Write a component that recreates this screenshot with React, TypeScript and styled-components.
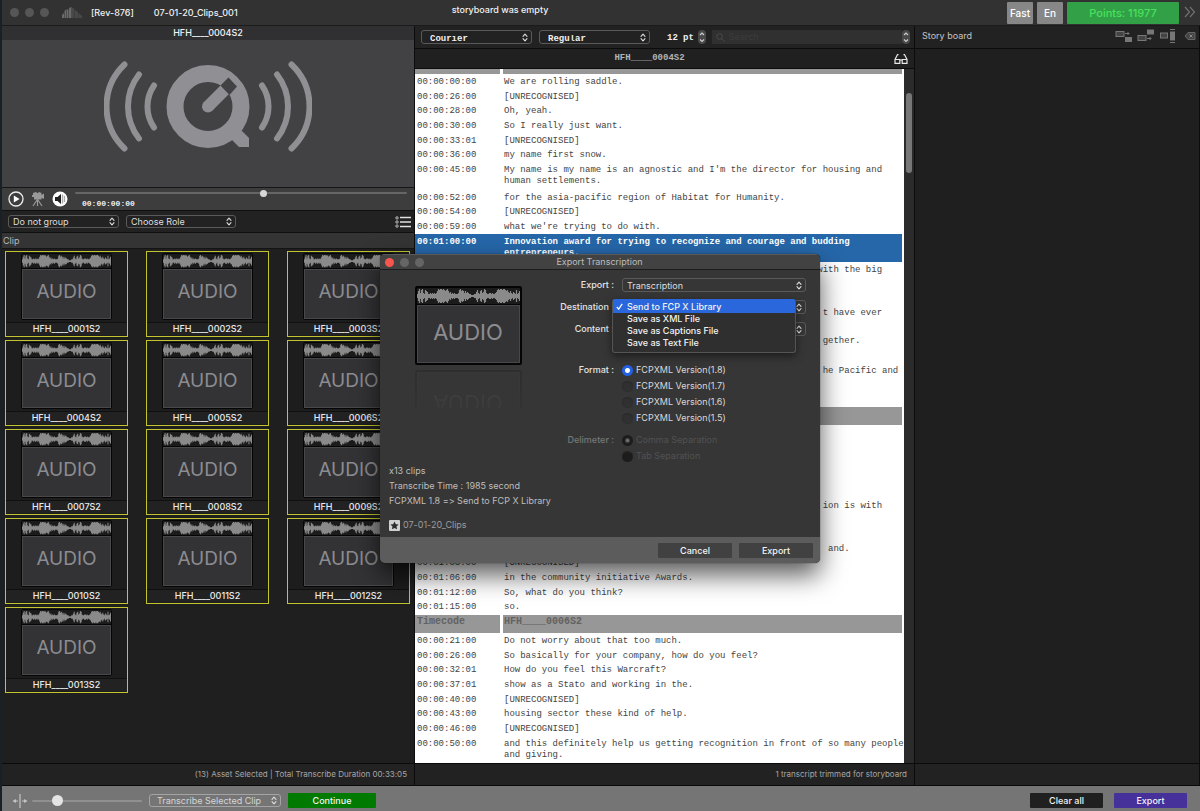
import React, { useState } from 'react';
import styled, { createGlobalStyle, css } from 'styled-components';

const UI = `Inter, "Liberation Sans", sans-serif`;
const MONO = `"Liberation Mono", monospace`;

const GlobalStyle = createGlobalStyle`
  *, *::before, *::after { box-sizing: border-box; }
  body { margin: 0; background: #1f1f1f; font-family: ${UI}; font-feature-settings: "calt" 0; }
  button, input, select { font: inherit; font-feature-settings: inherit; color: inherit; margin: 0; padding: 0; border: 0; background: none; }
  h1, h2, p, ul, fieldset, legend { margin: 0; padding: 0; border: 0; font: inherit; font-feature-settings: inherit; list-style: none; }
  table { border-collapse: separate; border-spacing: 0; }
`;

const Window = styled.div`
  position: relative;
  display: flex;
  flex-direction: column;
  height: 100vh;
  min-height: 640px;
  border-left: 2px solid #1a2026;
  color: #dedede;
  font-size: 9px;
  line-height: 12px;
  overflow: hidden;
`;

const TitleBar = styled.header`
  display: grid;
  grid-template-columns: 1fr auto 1fr;
  height: 26px;
  flex: none;
  background: #323232;
  border-bottom: 1px solid #1b1b1b;
  color: #f0f0f0;
  font-weight: 500;
`;

const TitleLeft = styled.div`
  display: flex;
  align-items: center;
  padding-left: 8px;
`;

const Lights = styled.div<{ $gap: number }>`
  display: flex;
  gap: ${(p) => p.$gap}px;
`;

const Light = styled.button<{ $color: string }>`
  width: 9px;
  height: 9px;
  border-radius: 50%;
  background: ${(p) => p.$color};
`;

const AppGlyph = styled.svg`
  width: 22px;
  height: 14px;
  margin: 0 8px 0 12px;
`;

const Revision = styled.span`
  margin-right: 20px;
`;

const TitleNote = styled.p`
  line-height: 19px;
  padding-right: 202px;
`;

const TitleRight = styled.div`
  display: flex;
  justify-content: flex-end;
  align-items: center;
  gap: 4px;
  padding-right: 4px;
`;

const Tag = styled.button`
  width: 26px;
  height: 22px;
  border-radius: 1px;
  background: #878787;
  color: #fff;
  font-size: 10px;
`;

const Points = styled.button`
  width: 112px;
  height: 22px;
  border-radius: 1px;
  background: #32a047;
  color: #49e05c;
  font-size: 11px;
`;

const MoreButton = styled.button`
  width: 12px;
  height: 14px;
  margin-left: 1px;
  color: #707070;
`;

const Panels = styled.main`
  display: grid;
  grid-template-columns: 413fr 500fr 285fr;
  grid-template-rows: minmax(0, 1fr);
  flex: 1;
  min-height: 0;
`;

const Panel = styled.section`
  display: flex;
  flex-direction: column;
  min-width: 0;
  min-height: 0;
  background: #1f1f1f;
  border-right: 1px solid #0c0c0c;
`;

const StatusLine = styled.p`
  flex: none;
  height: 23px;
  padding: 4px 7px 0 0;
  border-top: 1px solid #0a0a0a;
  border-bottom: 1px solid #0a0a0a;
  background: #222;
  color: #a6a6a6;
  font-size: 8px;
  text-align: right;
`;

/* Player */

const PlayerTitle = styled.h2`
  flex: none;
  height: 14px;
  background: #303033;
  color: #f4f4f4;
  font-weight: 500;
  line-height: 13px;
  text-align: center;
`;

const Screen = styled.div`
  display: flex;
  justify-content: center;
  flex: none;
  height: 148px;
  padding-top: 21px;
  background: #424245;
  border-bottom: 1px solid #151515;
`;

const Transport = styled.div`
  display: flex;
  align-items: center;
  flex: none;
  height: 22px;
  padding: 0 7px 0 6px;
  background: #3d3d3d;
`;

const IconButton = styled.button<{ $w: number; $h: number; $mr?: number }>`
  flex: none;
  width: ${(p) => p.$w}px;
  height: ${(p) => p.$h}px;
  margin-right: ${(p) => p.$mr ?? 0}px;
  svg { display: block; width: 100%; height: 100%; }
`;

const Scrubber = styled.div`
  display: flex;
  flex-direction: column;
  flex: 1;
  gap: 2px;
`;

const Timecode = styled.output`
  padding-left: 7px;
  font: bold 8px/10px ${MONO};
  color: #f0f0f0;
`;

const Range = styled.input<{ $thumb: number; $track: string; $thumbColor: string }>`
  appearance: none;
  display: block;
  width: 100%;
  height: ${(p) => p.$thumb}px;
  &::-webkit-slider-runnable-track {
    height: 2px;
    border-radius: 1px;
    background: ${(p) => p.$track};
  }
  &::-webkit-slider-thumb {
    appearance: none;
    width: ${(p) => p.$thumb}px;
    height: ${(p) => p.$thumb}px;
    margin-top: calc(1px - ${(p) => p.$thumb}px / 2);
    border-radius: 50%;
    background: ${(p) => p.$thumbColor};
  }
`;

const FilterBar = styled.div`
  display: flex;
  align-items: center;
  gap: 7px;
  flex: none;
  height: 23px;
  padding: 0 3px 0 6px;
  background: #222;
  border-top: 1px solid #101010;
  border-bottom: 1px solid #101010;
`;

const SelectBox = styled.span<{ $w?: number; $h?: number; $line?: string }>`
  display: flex;
  align-items: center;
  width: ${(p) => (p.$w ? p.$w + 'px' : '100%')};
  height: ${(p) => p.$h ?? 13}px;
  padding-right: 3px;
  border: 1px solid ${(p) => p.$line ?? '#5a5a5a'};
  border-radius: 3px;
  svg { flex: none; width: 6px; height: 9px; }
`;

const Select = styled.select<{ $mono?: boolean; $pad?: number }>`
  appearance: none;
  flex: 1;
  min-width: 0;
  height: 100%;
  padding-left: ${(p) => p.$pad ?? 4}px;
  line-height: 11px;
  outline: 0;
  ${(p) => p.$mono && css`
    padding-top: 4px;
    font: bold 9px/9px ${MONO};
    color: #f0f0f0;
  `}
  option { color: #111; }
`;

const ListButton = styled(IconButton)`
  margin-left: auto;
`;

const ColumnTitle = styled.h2`
  flex: none;
  height: 16px;
  padding-left: 1px;
  line-height: 16px;
  background: #343434;
  border-bottom: 1px solid #141414;
  color: #b8b8b8;
`;

const ClipGrid = styled.ul`
  display: grid;
  grid-template-columns: repeat(3, 123px);
  grid-auto-rows: 86px;
  justify-content: space-between;
  align-content: start;
  row-gap: 3px;
  flex: 1;
  min-height: 0;
  padding: 2px 4px 0 3px;
  overflow: hidden;
`;

const ClipCard = styled.button`
  display: flex;
  flex-direction: column;
  align-items: center;
  width: 100%;
  height: 86px;
  padding-top: 1px;
  border: 1px solid #c2c52e;
  background: #1d1d1d;
  color: #ececec;
  font-weight: 500;
`;

const ClipName = styled.span`
  align-self: stretch;
  margin-top: 2px;
  border-top: 1px solid #101010;
  background: #222;
  line-height: 12px;
`;

const AudioBox = styled.span<{ $large?: boolean }>`
  display: flex;
  flex-direction: column;
  width: ${(p) => (p.$large ? 107 : 91)}px;
  height: ${(p) => (p.$large ? 79 : 67)}px;
  border: ${(p) => (p.$large ? 2 : 1)}px solid #050505;
  border-radius: 2px;
  background: #333336;
  color: #8c8c90;
  font-size: ${(p) => (p.$large ? 22 : 19)}px;
  font-weight: 400;
  svg {
    flex: none;
    width: 100%;
    height: ${(p) => (p.$large ? 17 : 15)}px;
    background: #1b1b1b;
    border-bottom: 1px solid #050505;
  }
`;

const AudioWord = styled.span`
  display: flex;
  align-items: center;
  justify-content: center;
  flex: 1;
  padding-bottom: 4px;
  border: 1px solid #48484b;
  line-height: 24px;
`;

/* Transcript */

const FontBar = styled.div`
  display: flex;
  align-items: center;
  flex: none;
  height: 23px;
  padding: 0 4px 0 6px;
  background: #222;
  border-bottom: 1px solid #0c0c0c;
`;

const FontSelects = styled.div`
  display: flex;
  gap: 7px;
`;

const SizeLabel = styled.label`
  display: flex;
  align-items: center;
  margin-left: 17px;
  padding-top: 2px;
  font: bold 9px/12px ${MONO};
  color: #f0f0f0;
`;

const SizeInput = styled.input`
  width: 11px;
  margin-right: 5px;
`;

const Stepper = styled.button`
  width: 8px;
  height: 14px;
  margin: 0 6px 0 4px;
  border-radius: 4px;
  background: #4a4a4a;
  svg { display: block; width: 8px; height: 14px; }
`;

const SearchField = styled.label`
  display: flex;
  align-items: center;
  flex: 1;
  gap: 4px;
  height: 14px;
  padding-left: 4px;
  background: #303030;
  svg { width: 9px; height: 9px; }
  input { flex: 1; min-width: 0; color: #ccc; outline: 0; }
  input::placeholder { color: #3c3c3c; }
`;

const SearchStepper = styled(Stepper)`
  margin: 0;
`;

const DocBar = styled.div`
  display: flex;
  align-items: center;
  flex: none;
  height: 20px;
  padding: 0 6px 0 0;
  background: #202020;
  border-bottom: 1px solid #0c0c0c;
`;

const DocTitle = styled.h2`
  flex: 1;
  padding-bottom: 1px;
  padding-right: 10px;
  font: bold 9px/12px ${MONO};
  color: #b4b4b4;
  text-align: center;
`;

const Paper = styled.div`
  display: flex;
  flex: 1;
  min-height: 0;
  overflow: hidden;
  background: #fff;
`;

const TableWrap = styled.div`
  flex: 1;
  min-width: 0;
  overflow: hidden;
  padding-right: 2px;
`;

const Transcript = styled.table`
  width: 100%;
  table-layout: fixed;
  font: 9px/11px ${MONO};
  color: #444;
`;

const GroupHead = styled.tr<{ $clipped?: boolean }>`
  th {
    height: 19px;
    padding: 0 0 4px 2px;
    border-top: 1px solid #fff;
    background: #979797;
    color: #626262;
    font: bold 10px/12px ${MONO};
    text-align: left;
    white-space: nowrap;
    ${(p) => p.$clipped && css`
      height: 5px;
      padding: 0;
      border-top: 0;
      line-height: 0;
    `}
  }
  th + th { border-left: 3px solid #fff; padding-left: 1px; }
`;

const Line = styled.tr<{ $tall?: boolean; $active?: boolean }>`
  td {
    height: ${(p) => (p.$tall ? 28 : 15)}px;
    padding: 3px 0 0 2px;
    vertical-align: top;
    white-space: pre;
  }
  &:nth-child(3n) td { height: ${(p) => (p.$tall ? 28 : 14)}px; }
  td + td { padding-left: 4px; }
  ${(p) => p.$active && css`
    background: #2667a9;
    color: #fff;
    font-weight: bold;
  `}
`;

const ScrollTrack = styled.div`
  flex: none;
  width: 10px;
  padding: 24px 2px 0 2px;
  background: #2b2b2b;
`;

const ScrollThumb = styled.div`
  width: 6px;
  height: 80px;
  border-radius: 3px;
  background: #777;
`;

/* Story board */

const StoryHead = styled.div`
  display: flex;
  align-items: center;
  flex: none;
  gap: 4px;
  height: 23px;
  padding: 0 3px 3px 7px;
  background: #222;
  border-bottom: 1px solid #0c0c0c;
`;

const StoryTitle = styled.h2`
  margin-right: auto;
  color: #c4c4c4;
`;

const Fill = styled.div`
  flex: 1;
`;

/* Footer */

const Footer = styled.footer`
  display: flex;
  align-items: center;
  flex: none;
  height: 25px;
  padding: 4px 13px 0 10px;
  background: #757575;
  color: #f2f2f2;
`;

const ZoomWrap = styled.div`
  width: 110px;
  margin: 0 7px 0 4px;
`;

const FlatButton = styled.button<{ $w: number; $fill: string }>`
  width: ${(p) => p.$w}px;
  height: 15px;
  border-radius: 1px;
  background: ${(p) => p.$fill};
  color: #f4f4f4;
  font-weight: 500;
`;

const FooterStart = styled.div`
  display: flex;
  align-items: center;
  gap: 7px;
  color: #d6d6d6;
`;

const FooterEnd = styled.div`
  display: flex;
  gap: 11px;
  margin-left: auto;
`;

/* Export sheet */

const Dialog = styled.div`
  position: absolute;
  top: 254px;
  left: calc(50% - 221px);
  display: flex;
  flex-direction: column;
  width: 440px;
  border-radius: 5px;
  background: #363636;
  box-shadow: 0 0 1px #000, 0 12px 26px rgba(0, 0, 0, 0.65);
  overflow: hidden;
`;

const DialogBar = styled.div`
  display: grid;
  grid-template-columns: 40px 1fr 40px;
  align-items: center;
  height: 16px;
  padding-left: 5px;
  background: #424242;
  border-top: 1px solid #5a5a5a;
  border-bottom: 1px solid #1c1c1c;
`;

const DialogTitle = styled.h1`
  padding-right: 6px;
  color: #bdbdbd;
  text-align: center;
`;

const DialogBody = styled.div`
  display: grid;
  grid-template-columns: 176px 1fr;
  padding: 8px 14px 0 8px;
`;

const Preview = styled.div`
  display: flex;
  flex-direction: column;
  align-items: center;
  gap: 5px;
  padding: 8px 16px 0 0;
`;

const Reflection = styled.span`
  height: 38px;
  overflow: hidden;
  opacity: 0.15;
  mask-image: linear-gradient(#000, rgba(0, 0, 0, 0.4));
  > span { transform: scaleY(-1); background: #363636; }
`;

const Form = styled.form`
  display: flex;
  flex-direction: column;
`;

const Row = styled.div<{ $gap?: number }>`
  position: relative;
  display: grid;
  grid-template-columns: 50px 184px;
  column-gap: 8px;
  margin-top: ${(p) => p.$gap ?? 0}px;
`;

const RowLabel = styled.label<{ $dim?: boolean }>`
  justify-self: end;
  line-height: 14px;
  font-weight: 500;
  white-space: nowrap;
  color: ${(p) => (p.$dim ? '#767676' : '#e4e4e4')};
`;

const RadioGroup = styled.div`
  display: flex;
  flex-direction: column;
  gap: 2px;
`;

const RadioLabel = styled.label<{ $dim?: boolean }>`
  display: flex;
  align-items: center;
  gap: 3px;
  height: 14px;
  color: ${(p) => (p.$dim ? '#525252' : '#dadada')};
`;

const Radio = styled.input`
  appearance: none;
  width: 11px;
  height: 11px;
  border-radius: 50%;
  background: #303030;
  box-shadow: inset 0 1px 1px #282828;
  &:checked { background: radial-gradient(circle, #fff 0 2px, #2260e4 3px); box-shadow: none; }
  &:disabled { background: #1c1c1c; }
  &:disabled:checked { background: radial-gradient(circle, #6e6e6e 0 1px, #1c1c1c 3px); }
`;

const Menu = styled.ul`
  position: absolute;
  top: -1px;
  left: 48px;
  z-index: 2;
  width: 184px;
  padding-bottom: 3px;
  border: 1px solid #555;
  border-top-color: #2a66dc;
  border-radius: 3px;
  background: #2f2f2f;
  box-shadow: 0 3px 8px rgba(0, 0, 0, 0.5);
`;

const MenuItem = styled.button<{ $on: boolean }>`
  display: flex;
  align-items: center;
  width: 100%;
  height: ${(p) => (p.$on ? 13 : 12)}px;
  padding-left: 3px;
  gap: 4px;
  background: ${(p) => (p.$on ? '#2a66dc' : 'transparent')};
  color: #f2f2f2;
  font-weight: 500;
  svg { width: 7px; height: 7px; visibility: ${(p) => (p.$on ? 'visible' : 'hidden')}; }
`;

const Summary = styled.div`
  padding: 0 9px;
  color: #bebebe;
  line-height: 15px;
`;

const Project = styled.p`
  display: flex;
  align-items: center;
  gap: 3px;
  margin: 9px 0 5px;
  color: #9c9c9c;
  svg { width: 11px; height: 11px; margin-top: 2px; }
`;

const DialogFooter = styled.div`
  display: flex;
  justify-content: flex-end;
  gap: 7px;
  height: 26px;
  padding: 6px 7px 5px;
  background: #5c5c5c;
`;

const Chevrons = () => (
  <svg viewBox="0 0 6 9" fill="none" stroke="#dcdcdc" strokeWidth="1.1" strokeLinecap="round" strokeLinejoin="round" aria-hidden>
    <path d="M1 3.4 3 1.1 5 3.4M1 5.6 3 7.9 5 5.6" />
  </svg>
);

const StepArrows = () => (
  <svg viewBox="0 0 8 14" fill="none" stroke="#cfcfcf" strokeWidth="1.1" aria-hidden>
    <path d="M2 5 4 3 6 5M2 9.5 4 11.5 6 9.5" />
  </svg>
);

const levels = [
  2, 5, 7, 3, 6, 7, 3, 2, 6, 5, 4, 2, 2, 3, 2, 3, 2, 3, 2, 3, 5, 7, 6, 7, 7, 6, 7, 6, 5, 6, 7, 5, 3, 4, 2, 3, 2, 3, 2, 2,
  2, 3, 6, 7, 5, 6, 5, 3, 5, 3, 4, 3, 2, 2, 1, 1, 1, 2, 2, 4, 6, 3, 2, 5, 6, 3, 4, 7, 6, 3, 2, 2, 3, 3, 2, 3, 2, 2, 3, 4,
  6, 7, 6, 7, 7, 6, 7, 7, 6, 5, 6, 4, 3, 5, 3, 2, 4, 3, 2, 6, 2, 3, 5,
];
const wave = levels.map((v, i) => `M${i + 0.5} ${8 - v}V${8 + v}`).join('');

const AudioThumb = ({ large }: { large?: boolean }) => (
  <AudioBox $large={large}>
    <svg viewBox="0 0 103 16" preserveAspectRatio="none" aria-hidden>
      <path d={wave} stroke="#8a8a8a" strokeWidth="1.2" />
    </svg>
    <AudioWord>AUDIO</AudioWord>
  </AudioBox>
);

interface PickProps {
  label: string;
  value: string;
  w?: number;
  h?: number;
  mono?: boolean;
  pad?: number;
  id?: string;
  line?: string;
}

const Pick = ({ label, value, w, h, mono, pad, id, line }: PickProps) => (
  <SelectBox $w={w} $h={h} $line={line}>
    <Select id={id} aria-label={label} $mono={mono} $pad={pad} defaultValue={value}>
      <option>{value}</option>
    </Select>
    <Chevrons />
  </SelectBox>
);

const QuickTimeMark = () => (
  <svg width="208" height="92" viewBox="0 0 208 92" fill="none" stroke="#8f8f94" strokeLinecap="round" aria-hidden>
    <g strokeWidth="6">
      <path d="M20.500 3.500A58 58 0 0 0 20.500 87.500" />
      <path d="M35 13.500A52 52 0 0 0 35 77.500" />
      <path d="M50 24.500A37 37 0 0 0 50 66.500" />
      <path d="M187.500 3.500A58 58 0 0 1 187.500 87.500" />
      <path d="M173 13.500A52 52 0 0 1 173 77.500" />
      <path d="M158 24.500A37 37 0 0 1 158 66.500" />
    </g>
    <circle cx="104" cy="45.500" r="33" strokeWidth="17" />
    <path d="M137 69 145 77V86H135L125 76Z" fill="#8f8f94" stroke="none" />
    <path d="M104 45.500 121 28.500" strokeWidth="12" strokeLinecap="butt" />
    <circle cx="104" cy="45.500" r="6" fill="#8f8f94" stroke="none" />
    <path d="M116.500 24.500 124.500 16.500 133 25.500 125.500 34Z" fill="#424245" stroke="none" />
  </svg>
);

type Entry = { t: string; s: string; active?: boolean };
type Group = { name: string; clipped?: boolean; rows: Entry[] };

const groups: Group[] = [
  {
    name: 'HFH____0004S2',
    clipped: true,
    rows: [
      { t: '00:00:00:00', s: 'We are rolling saddle.' },
      { t: '00:00:26:00', s: '[UNRECOGNISED]' },
      { t: '00:00:28:00', s: 'Oh, yeah.' },
      { t: '00:00:30:00', s: 'So I really just want.' },
      { t: '00:00:33:01', s: '[UNRECOGNISED]' },
      { t: '00:00:36:00', s: 'my name first snow.' },
      { t: '00:00:45:00', s: "My name is my name is an agnostic and I'm the director for housing and\nhuman settlements." },
      { t: '00:00:52:00', s: 'for the asia-pacific region of Habitat for Humanity.' },
      { t: '00:00:54:00', s: '[UNRECOGNISED]' },
      { t: '00:00:59:00', s: "what we're trying to do with." },
      { t: '00:01:00:00', s: 'Innovation award for trying to recognize and courage and budding\nentrepreneurs.', active: true },
      { t: '', s: 'with the big'.padStart(70) + '\n ' },
      { t: '', s: '' },
      { t: '', s: 't have ever'.padStart(70) + '\n ' },
      { t: '', s: 'gether.'.padStart(66) },
      { t: '', s: '' },
      { t: '', s: 'he Pacific and'.padStart(73) + '\n ' },
      { t: '', s: '' },
    ],
  },
  {
    name: 'HFH____0005S2',
    rows: [
      { t: '', s: '' },
      { t: '', s: '' },
      { t: '', s: '' },
      { t: '', s: '' },
      { t: '', s: '' },
      { t: '', s: 'ion is with'.padStart(70) + '\n ' },
      { t: '', s: '' },
      { t: '', s: 'and.'.padStart(64) },
      { t: '00:01:03:00', s: '[UNRECOGNISED]' },
      { t: '00:01:06:00', s: 'in the community initiative Awards.' },
      { t: '00:01:12:00', s: 'So, what do you think?' },
      { t: '00:01:15:00', s: 'so.' },
    ],
  },
  {
    name: 'HFH____0006S2',
    rows: [
      { t: '00:00:21:00', s: 'Do not worry about that too much.' },
      { t: '00:00:26:00', s: 'So basically for your company, how do you feel?' },
      { t: '00:00:32:01', s: 'How do you feel this Warcraft?' },
      { t: '00:00:37:01', s: 'show as a Stato and working in the.' },
      { t: '00:00:40:00', s: '[UNRECOGNISED]' },
      { t: '00:00:43:00', s: 'housing sector these kind of help.' },
      { t: '00:00:46:00', s: '[UNRECOGNISED]' },
      { t: '00:00:50:00', s: 'and this definitely help us getting recognition in front of so many people\nand giving.' },
    ],
  },
];

const clips = Array.from({ length: 13 }, (_, i) => `HFH____${String(i + 1).padStart(4, '0')}S2`);
const destinations = ['Send to FCP X Library', 'Save as XML File', 'Save as Captions File', 'Save as Text File'];
const versions = ['1.8', '1.7', '1.6', '1.5'];

const ExportDialog = () => {
  const [destination, setDestination] = useState(destinations[0]);
  return (
    <Dialog role="dialog" aria-label="Export Transcription">
      <DialogBar>
        <Lights $gap={6}>
          <Light $color="#f7564f" aria-label="Close" />
          <Light $color="#656565" aria-label="Minimise" />
          <Light $color="#656565" aria-label="Zoom" />
        </Lights>
        <DialogTitle>Export Transcription</DialogTitle>
      </DialogBar>
      <DialogBody>
        <Preview>
          <AudioThumb large />
          <Reflection aria-hidden>
            <AudioThumb large />
          </Reflection>
        </Preview>
        <Form>
          <Row>
            <RowLabel htmlFor="kind">Export :</RowLabel>
            <Pick id="kind" label="Export" value="Transcription" h={14} />
          </Row>
          <Row $gap={8}>
            <RowLabel htmlFor="dest">Destination :</RowLabel>
            <Pick id="dest" label="Destination" value="" h={14} />
            <Menu role="listbox" aria-label="Destination">
              {destinations.map((d) => (
                <li key={d}>
                  <MenuItem type="button" $on={d === destination} onClick={() => setDestination(d)}>
                    <svg viewBox="0 0 7 7" fill="none" stroke="#fff" strokeWidth="1.2" aria-hidden>
                      <path d="M.8 4 2.7 6.2 6.2.8" />
                    </svg>
                    {d}
                  </MenuItem>
                </li>
              ))}
            </Menu>
          </Row>
          <Row $gap={8}>
            <RowLabel htmlFor="content">Content :</RowLabel>
            <Pick id="content" label="Content" value="" h={14} />
          </Row>
          <Row $gap={27}>
            <RowLabel as="span">Format :</RowLabel>
            <RadioGroup role="radiogroup" aria-label="Format">
              {versions.map((v, i) => (
                <RadioLabel key={v}>
                  <Radio type="radio" name="format" defaultChecked={i === 0} />
                  {`FCPXML Version(${v})`}
                </RadioLabel>
              ))}
            </RadioGroup>
          </Row>
          <Row $gap={8}>
            <RowLabel as="span" $dim>Delimeter :</RowLabel>
            <RadioGroup role="radiogroup" aria-label="Delimeter">
              <RadioLabel $dim>
                <Radio type="radio" name="delimiter" defaultChecked disabled />
                Comma Separation
              </RadioLabel>
              <RadioLabel $dim>
                <Radio type="radio" name="delimiter" disabled />
                Tab Separation
              </RadioLabel>
            </RadioGroup>
          </Row>
        </Form>
      </DialogBody>
      <Summary>
        <p>x13 clips</p>
        <p>Transcribe Time : 1985 second</p>
        <p>{'FCPXML 1.8 => Send to FCP X Library'}</p>
        <Project>
          <svg viewBox="0 0 11 11" aria-hidden>
            <rect width="11" height="11" rx="1" fill="#d0d0d0" />
            <path d="M5.5 1.5 6.8 4.2 9.6 4.5 7.5 6.4 8.1 9.3 5.5 7.9 2.9 9.3 3.5 6.4 1.4 4.5 4.2 4.2Z" fill="#2c2c2c" />
          </svg>
          07-01-20_Clips
        </Project>
      </Summary>
      <DialogFooter>
        <FlatButton type="button" $w={74} $fill="#414141">Cancel</FlatButton>
        <FlatButton type="button" $w={74} $fill="#414141">Export</FlatButton>
      </DialogFooter>
    </Dialog>
  );
};

export default function App() {
  return (
    <>
      <GlobalStyle />
      <Window>
        <TitleBar>
          <TitleLeft>
            <Lights $gap={6}>
              <Light $color="#565656" aria-label="Close" />
              <Light $color="#565656" aria-label="Minimise" />
              <Light $color="#565656" aria-label="Zoom" />
            </Lights>
            <AppGlyph viewBox="0 0 22 14" aria-hidden>
              <path d="M1 12V9L3 7V12ZM3.500 12V5L5.500 3V12ZM6 12V3L7.500 4V12ZM8 12V2L10.500 1V12Z" fill="#6a6a6a" />
              <path d="M10.500 12V1L13.500 3V12ZM14 12V4L17 6V12ZM17.500 12V7L21 10V12Z" fill="#484848" />
            </AppGlyph>
            <Revision>[Rev-876]</Revision>
            <span>07-01-20_Clips_001</span>
          </TitleLeft>
          <TitleNote>storyboard was empty</TitleNote>
          <TitleRight>
            <Tag>Fast</Tag>
            <Tag>En</Tag>
            <Points>Points: 11977</Points>
            <MoreButton aria-label="More">
              <svg width="12" height="12" viewBox="0 0 12 12" fill="none" stroke="currentColor" strokeWidth="1.2" aria-hidden>
                <path d="M1 1 5.5 6 1 11M6 1 10.5 6 6 11" />
              </svg>
            </MoreButton>
          </TitleRight>
        </TitleBar>

        <Panels>
          <Panel>
            <PlayerTitle>HFH____0004S2</PlayerTitle>
            <Screen>
              <QuickTimeMark />
            </Screen>
            <Transport>
              <IconButton $w={16} $h={16} $mr={7} aria-label="Play">
                <svg viewBox="0 0 16 16" aria-hidden>
                  <circle cx="8" cy="8" r="7" fill="none" stroke="#eee" strokeWidth="1.3" />
                  <path d="M5.8 4.4 11.6 8 5.8 11.6Z" fill="#fff" />
                </svg>
              </IconButton>
              <IconButton $w={14} $h={16} $mr={7} aria-label="Camera">
                <svg viewBox="0 0 14 16" fill="#999" aria-hidden>
                  <path d="M2 2 5 1 6.500 2.200 8 1 10.500 2V4L13 2.500V8L10.500 6.800V8.500H3V6H1V4H2Z" />
                  <path d="M6.500 8V15M6 9 2 15M7 9 11 15" stroke="#999" strokeWidth="1.2" />
                </svg>
              </IconButton>
              <IconButton $w={16} $h={16} $mr={7} aria-label="Volume">
                <svg viewBox="0 0 16 16" aria-hidden>
                  <circle cx="8" cy="8" r="7.500" fill="#fff" />
                  <path d="M9 3V13L5.500 10H3V6H5.500Z" fill="#222" />
                  <path d="M10.500 3.500V12.500M12.500 5V11" stroke="#aaa" strokeWidth="1.3" />
                </svg>
              </IconButton>
              <Scrubber>
                <Range type="range" aria-label="Position" min={0} max={100} defaultValue={57} $thumb={7} $track="#666" $thumbColor="#d8d8d8" />
                <Timecode>00:00:00:00</Timecode>
              </Scrubber>
            </Transport>
            <FilterBar>
              <Pick label="Grouping" value="Do not group" w={111} />
              <Pick label="Role" value="Choose Role" w={110} />
              <ListButton $w={16} $h={12} aria-label="List view">
                <svg viewBox="0 0 16 12" fill="none" stroke="#e0e0e0" aria-hidden>
                  <path d="M5 1.500H16M5 6H16M5 10.500H16" strokeWidth="1.3" />
                  <circle cx="2" cy="1.900" r="1.200" strokeWidth=".8" />
                  <circle cx="2" cy="6" r="1.200" strokeWidth=".8" />
                  <circle cx="2" cy="10.100" r="1.200" strokeWidth=".8" />
                </svg>
              </ListButton>
            </FilterBar>
            <ColumnTitle>Clip</ColumnTitle>
            <ClipGrid>
              {clips.map((name) => (
                <li key={name}>
                  <ClipCard>
                    <AudioThumb />
                    <ClipName>{name}</ClipName>
                  </ClipCard>
                </li>
              ))}
            </ClipGrid>
            <StatusLine>(13) Asset Selected | Total Transcribe Duration 00:33:05</StatusLine>
          </Panel>

          <Panel>
            <FontBar>
              <FontSelects>
                <Pick label="Font" value="Courier" w={111} h={14} mono pad={8} />
                <Pick label="Style" value="Regular" w={111} h={14} mono pad={8} />
              </FontSelects>
              <SizeLabel>
                <SizeInput type="text" aria-label="Font size" defaultValue="12" />
                pt
              </SizeLabel>
              <Stepper aria-label="Change font size">
                <StepArrows />
              </Stepper>
              <SearchField>
                <svg viewBox="0 0 9 9" fill="none" stroke="#4a4a4a" aria-hidden>
                  <circle cx="3.500" cy="3.500" r="2.800" />
                  <path d="M5.600 5.600 8.500 8.500" />
                </svg>
                <input type="search" aria-label="Search" placeholder="Search" />
              </SearchField>
              <SearchStepper aria-label="Next match">
                <StepArrows />
              </SearchStepper>
            </FontBar>
            <DocBar>
              <DocTitle>HFH____0004S2</DocTitle>
              <IconButton $w={14} $h={10} aria-label="Reading mode">
                <svg viewBox="0 0 14 10" fill="none" stroke="#e8e8e8" strokeWidth="1.200" aria-hidden>
                  <path d="M4.500 .6H3.500L1 5.500V9.300H5.800V5.500H1M9.500 .6H10.500L13 5.500V9.300H8.200V5.500H13M5.800 6H8.200" />
                </svg>
              </IconButton>
            </DocBar>
            <Paper>
              <TableWrap>
                <Transcript>
                  <colgroup>
                    <col width="85" />
                    <col />
                  </colgroup>
                  {groups.map((g) => (
                    <tbody key={g.name}>
                      <GroupHead $clipped={g.clipped}>
                        <th scope="col">{g.clipped ? '' : 'Timecode'}</th>
                        <th scope="col">{g.clipped ? '' : g.name}</th>
                      </GroupHead>
                      {g.rows.map((r, i) => (
                        <Line key={i} $tall={r.s.includes('\n')} $active={r.active}>
                          <td>{r.t}</td>
                          <td>{r.s}</td>
                        </Line>
                      ))}
                    </tbody>
                  ))}
                </Transcript>
              </TableWrap>
              <ScrollTrack>
                <ScrollThumb />
              </ScrollTrack>
            </Paper>
            <StatusLine>1 transcript trimmed for storyboard</StatusLine>
          </Panel>

          <Panel>
            <StoryHead>
              <StoryTitle>Story board</StoryTitle>
              <IconButton $w={18} $h={14} aria-label="Insert">
                <svg viewBox="0 0 18 14" fill="none" stroke="#777" aria-hidden>
                  <rect x="1" y="2.500" width="8" height="5" fill="#444" />
                  <path d="M10 4.500H14M12.500 3 14 4.500 12.500 6" />
                  <rect x="10.500" y="8.500" width="6" height="4" fill="#777" />
                </svg>
              </IconButton>
              <IconButton $w={18} $h={14} aria-label="Append">
                <svg viewBox="0 0 18 14" fill="none" stroke="#777" aria-hidden>
                  <rect x="1" y="6.500" width="8" height="5" fill="#444" />
                  <path d="M10 9.500H14M12.500 8 14 9.500 12.500 11" />
                  <rect x="10.500" y="1" width="6" height="4" fill="#777" />
                </svg>
              </IconButton>
              <IconButton $w={18} $h={14} $mr={3} aria-label="Replace">
                <svg viewBox="0 0 18 14" fill="none" stroke="#777" aria-hidden>
                  <rect x="1.500" y="4" width="7" height="5" fill="#444" />
                  <path d="M11 .5H16M11 13.500H16" />
                  <rect x="11.500" y="3" width="4" height="8" fill="#777" />
                </svg>
              </IconButton>
              <IconButton $w={12} $h={10} aria-label="Delete">
                <svg viewBox="0 0 12 10" fill="none" stroke="#666" aria-hidden>
                  <path d="M4 1.500H11V8.500H4L1 5Z" fill="#444" />
                  <path d="M5.500 3.500 8.500 6.500M8.500 3.500 5.500 6.500" stroke="#888" />
                </svg>
              </IconButton>
            </StoryHead>
            <Fill />
            <StatusLine />
          </Panel>
        </Panels>

        <Footer>
          <IconButton $w={16} $h={14} aria-label="Fit width">
            <svg viewBox="0 0 16 14" fill="none" stroke="#c4c4c4" strokeWidth="1.200" aria-hidden>
              <path d="M8 0V14M1.500 7H6M10 7H14.500" />
              <path d="M0.500 7 4 5V9ZM15.500 7 12 5V9Z" fill="#c4c4c4" stroke="none" />
            </svg>
          </IconButton>
          <ZoomWrap>
            <Range type="range" aria-label="Zoom" min={0} max={100} defaultValue={20} $thumb={11} $track="#909090" $thumbColor="#e4e4e4" />
          </ZoomWrap>
          <FooterStart>
            <Pick label="Action" value="Transcribe Selected Clip" w={132} pad={7} line="#a4a4a4" />
            <FlatButton $w={88} $fill="#007a00">Continue</FlatButton>
          </FooterStart>
          <FooterEnd>
            <FlatButton $w={73} $fill="#202020">Clear all</FlatButton>
            <FlatButton $w={73} $fill="#46309a">Export</FlatButton>
          </FooterEnd>
        </Footer>

        <ExportDialog />
      </Window>
    </>
  );
}
